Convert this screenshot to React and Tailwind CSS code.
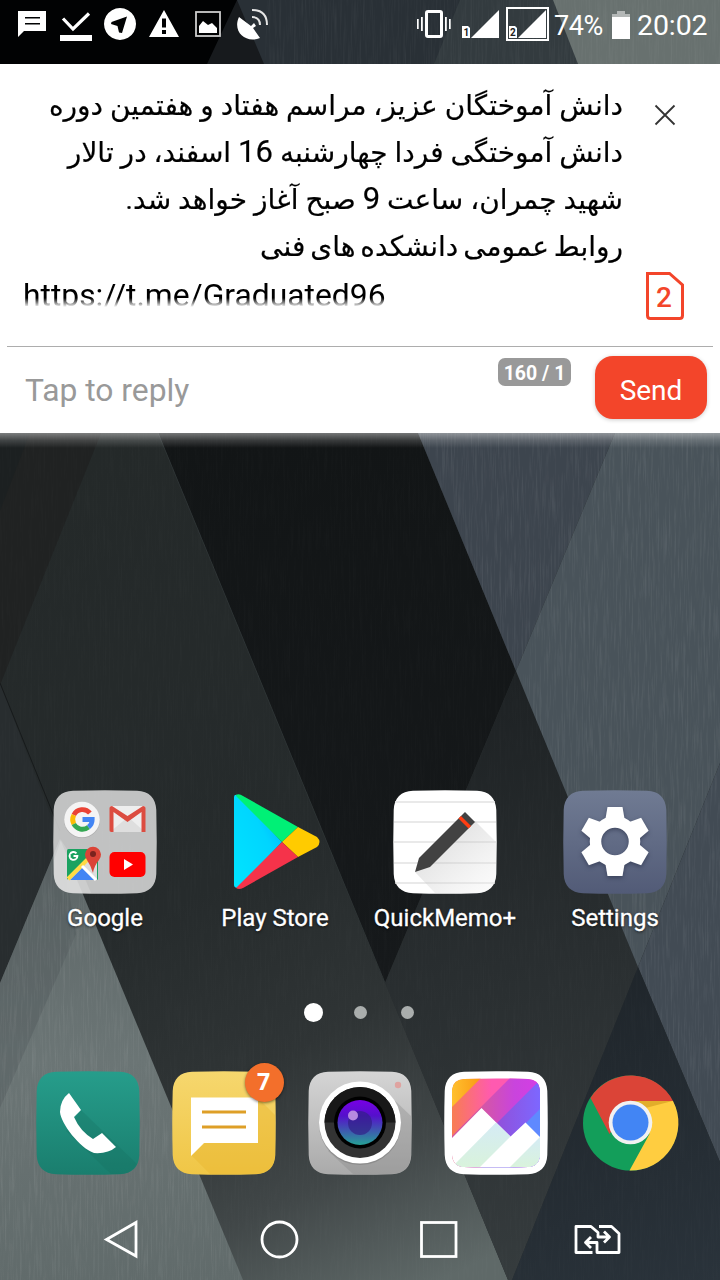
const Tile = ({ children, label }) => (
  <div className="flex w-[170px] flex-col items-center">
    <svg className="block h-[104px] w-[104px] overflow-visible" viewBox="0 0 104 104">{children}</svg>
    <span className="mt-[10px] font-['Roboto'] text-[24px] leading-[28px] whitespace-nowrap text-white [-webkit-text-stroke:0.3px_white] [text-shadow:0_1px_3px_rgba(0,0,0,.7)]">{label}</span>
  </div>
);

const SQ = "M20 0.800 Q52 -0.400 84 0.800 C96 1.200 102.800 8 103.300 20 Q104.200 52 103.300 84 C102.800 96 96 102.800 84 103.200 Q52 104.400 20 103.200 C8 102.800 1.200 96 0.700 84 Q-0.200 52 0.700 20 C1.200 8 8 1.200 20 0.800Z";

function Wallpaper() {
  return (
    <svg className="absolute inset-0 h-[1280px] w-[720px]" viewBox="0 0 720 1280" preserveAspectRatio="none">
      <defs>
        <linearGradient id="wMid" x1="60" y1="460" x2="440" y2="1280" gradientUnits="userSpaceOnUse">
          <stop offset="0" stopColor="#242929" /><stop offset=".5" stopColor="#262b2c" /><stop offset=".7" stopColor="#2f3435" /><stop offset=".85" stopColor="#414748" /><stop offset="1" stopColor="#5f6968" />
        </linearGradient>
        <linearGradient id="wBlack" x1="0" y1="433" x2="0" y2="983" gradientUnits="userSpaceOnUse">
          <stop offset="0" stopColor="#121516" /><stop offset="1" stopColor="#16191b" />
        </linearGradient>
        <linearGradient id="wLow" x1="450" y1="671" x2="580" y2="1280" gradientUnits="userSpaceOnUse">
          <stop offset="0" stopColor="#1d2123" /><stop offset="1" stopColor="#363c3e" />
        </linearGradient>
        <linearGradient id="wNavy" x1="560" y1="967" x2="720" y2="1280" gradientUnits="userSpaceOnUse">
          <stop offset="0" stopColor="#1e2429" /><stop offset="1" stopColor="#2a333b" />
        </linearGradient>
        <linearGradient id="wLight" x1="0" y1="839" x2="0" y2="1280" gradientUnits="userSpaceOnUse">
          <stop offset="0" stopColor="#5c6566" /><stop offset=".5" stopColor="#6b7575" /><stop offset="1" stopColor="#616b6b" />
        </linearGradient>
        <linearGradient id="shade" x1="0" y1="433" x2="0" y2="448" gradientUnits="userSpaceOnUse">
          <stop offset="0" stopColor="#fff" stopOpacity=".42" /><stop offset=".5" stopColor="#fff" stopOpacity=".16" /><stop offset="1" stopColor="#fff" stopOpacity="0" />
        </linearGradient>
        <filter id="brush" x="0" y="0" width="100%" height="100%">
          <feTurbulence type="fractalNoise" baseFrequency="0.55 0.025" numOctaves="3" seed="4" />
          <feColorMatrix values="0 0 0 0 1  0 0 0 0 1  0 0 0 0 1  1.6 0 0 0 -.68" />
        </filter>
        <clipPath id="cl"><path d="M60 839L243 1280H0V983ZM418 433H720V1162L638 967Z" /></clipPath>
      </defs>
      <rect width="720" height="1280" fill="#252a2b" />
      <path d="M0 433H158L508 1280H0Z" fill="url(#wMid)" />
      <path d="M0 433H101L0 685Z" fill="#202222" />
      <path d="M0 433H30L0 511Z" fill="#1c2021" />
      <path d="M158 433H418L516 671L385 983Z" fill="url(#wBlack)" />
      <path d="M516 671L385 983L508 1280H512L638 967Z" fill="url(#wLow)" />
      <path d="M418 433H615L516 671Z" fill="#3d454e" />
      <path d="M615 433H720V763L638 967L516 671Z" fill="#49535a" />
      <path d="M720 763V1162L638 967Z" fill="#424b54" />
      <path d="M638 967L720 1162V1280H512Z" fill="url(#wNavy)" />
      <path d="M0 683L60 839L0 983Z" fill="#282d2f" />
      <path d="M0 683L60 831" stroke="#171a1b" strokeWidth="1" />
      <path d="M60 839L243 1280H0V983Z" fill="url(#wLight)" />
      <path d="M76 934L60 839L0 983V1108Z" fill="#4f5859" opacity=".38" />
      <path d="M158 433L385 983" stroke="#2d3334" strokeWidth="1" />
      <g clipPath="url(#cl)"><rect width="720" height="1280" filter="url(#brush)" opacity=".08" /></g>
      <rect width="720" height="1280" filter="url(#brush)" opacity=".02" />
      <rect y="433" width="720" height="15" fill="url(#shade)" />
      <rect width="720" height="64" fill="#010203" />
      <path d="M237 0H720V64H207Z" fill="#171a1d" />
      <path d="M237 0H720V64H264Z" fill="#293036" />
      <path d="M460 0H720V64H434Z" fill="#333b3f" />
      <path d="M553 0H720V64H578Z" fill="#68716f" />
      <rect x="265" width="455" height="64" filter="url(#brush)" opacity=".06" />
    </svg>
  );
}

function StatusBar() {
  return (
    <header className="flex h-16 w-full">
      <svg className="block h-16 w-[553px]" viewBox="0 0 553 64" fill="#fff">
        <path d="M18 11H46V31H24L18 37ZM25 17V18.500H40V17ZM25 23V24.500H40V23Z" fillRule="evenodd" />
        <path d="M63 18.500L73 29L89 13.500" fill="none" stroke="#fff" strokeWidth="3.200" /><rect x="60" y="35" width="32" height="6" />
        <path fillRule="evenodd" d="M120 8a16 16 0 1 0 .01 0ZM127 16.500L122 33L119 32.500L117.500 26L111 24L111.500 22Z" />
        <path fillRule="evenodd" d="M164 10L179 37H149ZM162 18.500V27.500H166V18.500ZM162 30V34H166V30Z" />
        <rect x="196" y="12" width="24" height="24" fill="none" stroke="#ccc" strokeWidth="1.800" />
        <path d="M199 33V26L203 21L208 25L212 23L217 28V33Z" />
        <path d="M239 17L251 26L254 23L256 26L253 28L260 38C246 44 232 32 239 17Z" />
        <path d="M252 17Q260 17 260 25M252 10Q267 10 267 25" fill="none" stroke="#e5e5e5" strokeWidth="2" />
        <rect x="426.500" y="11.500" width="15" height="25" rx="1.500" fill="none" stroke="#fff" strokeWidth="3" />
        <path d="M417 19h1.700v10h-1.700zM421 17h1.800v14h-1.800zM445 17h1.800v14h-1.800zM449 19h1.700v10h-1.700z" />
        <path d="M471 38L499 10V38Z" /><path d="M462 26H468L470 28V38H462Z" />
        <rect x="507" y="8" width="41" height="32" fill="none" stroke="#fff" strokeWidth="2" />
        <path d="M518 38L546 10V38Z" /><path d="M509 26H515L517 28V38H509Z" />
        <text x="463.500" y="36" fontSize="10" fontWeight="700" fill="#222" fontFamily="Roboto">1</text>
        <text x="510" y="36" fontSize="10" fontWeight="700" fill="#222" fontFamily="Roboto">2</text>
      </svg>
      <div className="flex h-[52px] items-center font-['Roboto'] text-white">
        <span className="w-[59px] pl-px text-[27px] leading-none tracking-[-0.4px]">74%</span>
        <svg className="relative -top-px h-7 w-[18px]" viewBox="0 0 18 28"><path d="M5 0H13V3H18V28H0V3H5Z" fill="#fff" /><path d="M5 0H13V3H18V6H0V3H5Z" fill="#b4b8b7" /></svg>
        <span className="pl-[7px] text-[28.500px] leading-none tracking-[-0.1px]">20:02</span>
      </div>
    </header>
  );
}

function MessageCard() {
  const line = "block w-fit whitespace-nowrap [-webkit-text-stroke:0.2px_black]";
  return (
    <section className="flex h-[369px] flex-col bg-white px-[7px]">
      <div className="flex h-[282px] justify-between">
        <div className="ml-4 h-[243px] w-[600px] overflow-hidden pt-[18px] font-['Roboto','DejaVu_Sans',sans-serif] text-[28px] leading-[47px] text-black [mask-image:linear-gradient(#000_0,#000_234px,transparent_243px)]" dir="rtl">
          <span className={line}>دانش آموختگان عزیز، مراسم هفتاد و هفتمین دوره</span>
          <span className={line}>دانش آموختگی فردا چهارشنبه <b className="text-[31px] leading-none font-normal">16</b> اسفند، در تالار</span>
          <span className={line}>شهید چمران، ساعت <b className="text-[31px] leading-none font-normal">9</b> صبح آغاز خواهد شد.</span>
          <span className="block w-fit whitespace-nowrap [-webkit-text-stroke:0.2px_black] [word-spacing:-2px]">روابط عمومی دانشکده های فنی</span>
          <span className="block pt-[2px] text-left text-[31.800px]" dir="ltr">https://t.me/Graduated96</span>
        </div>
        <svg className="block h-[282px] w-[75px]" viewBox="638 64 75 282">
          <path d="M655.500 105.500L674.500 124.500M674.500 105.500L655.500 124.500" stroke="#333" strokeWidth="1.800" />
          <path d="M647.500 273.500H669.500L682.500 285V315.500Q682.500 318.500 679.500 318.500H650.500Q647.500 318.500 647.500 315.500Z" fill="none" stroke="#f3452a" strokeWidth="3" />
          <text x="664" y="307" textAnchor="middle" fontSize="28" fontWeight="500" fill="#f3452a" fontFamily="Roboto">2</text>
        </svg>
      </div>
      <div className="flex h-[87px] justify-between border-t border-[#adadad] font-['Roboto']">
        <span className="pt-[20px] pl-[18px] text-[31.800px] leading-[46px] text-[#999]">Tap to reply</span>
        <div className="flex pr-[6px]">
          <span className="mt-[11px] mr-6 h-7 w-[73px] rounded-[7px] bg-[#999] text-center text-[19.500px] leading-[31px] font-bold text-white">160 / 1</span>
          <button className="mt-[9px] h-[63px] w-[112px] rounded-[18px] bg-[#f3452a] pt-[6px] text-[28px] text-white shadow-[0_1px_4px_rgba(0,0,0,.2)]">Send</button>
        </div>
      </div>
    </section>
  );
}

function GoogleG({ x, y, s, mono }) {
  const c = mono ? ["#fff", "#fff", "#fff", "#fff"] : ["#ea4335", "#fbbc05", "#34a853", "#4285f4"];
  return (
    <g transform={`translate(${x} ${y}) scale(${s})`} fill="none" strokeWidth="4.800">
      <path d="M7.400 -6.500A9.700 9.700 0 0 0 -8.700 -4.500" stroke={c[0]} /><path d="M-8.700 -4.500A9.700 9.700 0 0 0 -8.700 4.500" stroke={c[1]} />
      <path d="M-8.700 4.500A9.700 9.700 0 0 0 6 7.600" stroke={c[2]} /><path d="M0 0H9.700A9.700 9.700 0 0 1 6 7.600" stroke={c[3]} />
    </g>
  );
}

function Apps() {
  return (
    <main className="flex h-[145px] justify-center">
      <Tile label="Google">
        <path d={SQ} fill="#e8e8e8" fillOpacity=".8" />
        <path d="M8 50L1 70V84C1.500 96 8 102.500 20 103H38L30 84Z" fill="#fff" opacity=".18" />
        <circle cx="29" cy="30" r="18" fill="#999" opacity=".5" /><circle cx="29" cy="29.500" r="17.800" fill="#f4f4f4" />
        <GoogleG x={29.500} y={29.500} s={1} />
        <path d="M57 16H92V42H57Z" fill="#eee" /><path d="M57 42L75 27L92 42Z" fill="#dedede" />
        <path d="M56.500 18Q56.500 16 59 16L74.500 26L90 16Q92.500 16 92.500 18V42H88.500V22L74.500 32L60.500 22V42H58Q56.500 42 56.500 40Z" fill="#dc4c40" />
        <rect x="14" y="59" width="31" height="31" rx="1.500" fill="#1aa260" /><path d="M14 90L44 60V90Z" fill="#ddd" /><path d="M17 90L30 77L43 90Z" fill="#4285f4" /><path d="M15 89L37 67" stroke="#ffdb46" strokeWidth="4" /><path d="M29 76L43 90" stroke="#fff" strokeWidth="3" />
        <GoogleG x={20.500} y={66} s={0.4} mono />
        <path d="M40 83Q38 76 34 70A8 8 0 1 1 46 70Q41 76 40 83Z" fill="#db4437" /><circle cx="40" cy="64" r="3" fill="#7b231e" />
        <rect x="56.500" y="62" width="36" height="25" rx="5" fill="#f00" /><path d="M71 69V80L80 74.500Z" fill="#fff" />
      </Tile>
      <Tile label="Play Store">
        <defs><linearGradient id="pb" x1="0" y1="1" x2="1" y2="0"><stop offset="0" stopColor="#00e5ff" /><stop offset=".6" stopColor="#00d5ff" /><stop offset="1" stopColor="#00a8ff" /></linearGradient></defs>
        <path d="M11 7Q11 4 15 5L59 52L15 98Q11 98 11 95Z" fill="url(#pb)" />
        <path d="M13 5Q16 3 20 6L75 37L59 52L13 6Z" fill="#00f076" />
        <path d="M75 37L94 47Q99 52 94 57L75 67L59 52Z" fill="#ffcb00" />
        <path d="M75 67L20 98Q16 100 13 98L59 52Z" fill="#f5334a" />
      </Tile>
      <Tile label="QuickMemo+">
        <path d={SQ} fill="#fff" /><path d="M2 12H102M1 32H103M1 52H103M1 73H103M2 93H102" stroke="#e2e2e2" strokeWidth="1.500" />
        <defs><linearGradient id="qs" x1="40" y1="40" x2="90" y2="100" gradientUnits="userSpaceOnUse"><stop stopColor="#aaa" stopOpacity=".4" /><stop offset="1" stopColor="#eee" stopOpacity=".3" /></linearGradient></defs>
        <path d="M22 82L82 31L103 52V84C102.500 96 96 102.500 84 103H42Z" fill="url(#qs)" />
        <path d="M22 82L26 68L72 22L82 32L37 77Z" fill="#424242" /><path d="M65.500 28.500L68 26L78 36L75.500 38.500Z" fill="#ff3d12" />
      </Tile>
      <Tile label="Settings">
        <defs><linearGradient id="sg" x2="0" y2="1"><stop stopColor="#707b93" /><stop offset="1" stopColor="#525b77" /></linearGradient></defs>
        <path d={SQ} fill="url(#sg)" />
        <g transform="translate(52 51.500)" fill="#fff" className="drop-shadow-[0_2px_2px_rgba(30,35,60,.5)]"><circle r="19.500" fill="none" stroke="#fff" strokeWidth="11.500" />
          {[0, 60, 120, 180, 240, 300].map((a) => <path key={a} transform={`rotate(${a})`} d="M-10 -20L-7.500 -34.500H7.500L10 -20L5 -15H-5Z" />)}
        </g>
      </Tile>
    </main>
  );
}

function Dock() {
  const c = "block h-[104px] w-[104px] overflow-visible";
  return (
    <div className="flex h-[104px] justify-between px-[36px]">
      <svg className={c} viewBox="0 0 104 104">
        <defs><linearGradient id="ph" x2="0" y2="1"><stop stopColor="#269d8b" /><stop offset="1" stopColor="#1a7e6e" /></linearGradient></defs>
        <path d={SQ} fill="url(#ph)" /><path d="M45 39L101 93Q96 103 82 103H75L30 60Z" fill="#126b5d" opacity=".25" />
        <path d="M33 22L45 39L38 46Q44 60 57 68L66 62L80 76Q72 83 58 82C44 77 25 53 24 41Q24 29 33 22Z" fill="#fff" />
      </svg>
      <div className="relative">
        <svg className={c} viewBox="0 0 104 104">
          <defs><linearGradient id="ms" x2="0" y2="1"><stop stopColor="#f6d76e" /><stop offset="1" stopColor="#f0c646" /></linearGradient></defs>
          <path d={SQ} fill="url(#ms)" /><path d="M86 27L103 44V84C102.500 96 96 102.500 84 103H38L19 84Z" fill="#e9b52d" opacity=".4" />
          <path d="M19 26.500H86V72H32L19 85Z" fill="#fff" /><path d="M30 41H74M30 56H74" stroke="#de9f27" strokeWidth="3.200" />
        </svg>
        <span className="absolute -top-[8px] -right-[8px] flex h-[39px] w-[39px] items-center justify-center rounded-full bg-[#f36f2b] pr-[2px] pb-[3px] font-['Open_Sans'] text-[23px] font-bold text-white shadow-[0_1px_3px_rgba(0,0,0,.5)]">7</span>
      </div>
      <svg className={c} viewBox="0 0 104 104">
        <defs><linearGradient id="ca" x2="0" y2="1"><stop stopColor="#d5d5d5" /><stop offset="1" stopColor="#aaa" /></linearGradient><linearGradient id="le" x2="0" y2="1"><stop stopColor="#7800e6" /><stop offset=".35" stopColor="#5510cb" /><stop offset="1" stopColor="#26a195" /></linearGradient></defs>
        <path d={SQ} fill="url(#ca)" /><path d="M80 23L103 45V84C102.500 96 96 102.500 84 103H45L20 80Z" fill="#888" opacity=".35" />
        <circle cx="52" cy="53" r="41" fill="#777" opacity=".5" /><circle cx="52" cy="51.500" r="41" fill="#fff" /><circle cx="52" cy="51.500" r="35.500" fill="#333" /><path d="M16.500 51.500A35.500 35.500 0 0 1 87.500 51.500Z" fill="#181818" />
        <circle cx="52" cy="51.500" r="26" fill="#000" /><circle cx="52" cy="51.500" r="22.500" fill="url(#le)" /><circle cx="52" cy="52" r="12" fill="#322087" opacity=".7" /><circle cx="45" cy="44.500" r="5" fill="#b68ae0" /><circle cx="90" cy="14" r="3.200" fill="#dfa3a0" />
      </svg>
      <svg className={c} viewBox="0 0 104 104">
        <defs>
          <clipPath id="gc"><path d="M20 8Q52 7 84 8Q95 8.500 96 19V84Q95 95.500 84 96Q52 97 20 96Q9 95.500 8 84V19Q9 8.500 20 8Z" /></clipPath>
          <linearGradient id="g0" x1="8" x2="36" y1="0" y2="0" gradientUnits="userSpaceOnUse"><stop stopColor="#ffc02e" /><stop offset="1" stopColor="#fa9a14" /></linearGradient>
          <linearGradient id="g1" x1="8" x2="96" y1="0" y2="0" gradientUnits="userSpaceOnUse"><stop stopColor="#f87d52" /><stop offset=".45" stopColor="#ff5ab0" /><stop offset="1" stopColor="#ff5ab0" /></linearGradient>
          <linearGradient id="g2" x1="38" x2="92" y1="0" y2="0" gradientUnits="userSpaceOnUse"><stop stopColor="#d457a4" /><stop offset=".6" stopColor="#c944dd" /><stop offset="1" stopColor="#d33ee4" /></linearGradient>
          <linearGradient id="g3" x1="50" x2="96" y1="0" y2="0" gradientUnits="userSpaceOnUse"><stop stopColor="#924fd8" /><stop offset="1" stopColor="#7d67ff" /></linearGradient>
          <linearGradient id="g4" x2="0" y2="1"><stop stopColor="#d5ebf5" /><stop offset="1" stopColor="#d9f3dc" /></linearGradient>
        </defs>
        <path d={SQ} fill="#fff" />
        <g clipPath="url(#gc)">
          <path d="M0 0H104V104H0Z" fill="url(#g1)" /><path d="M0 44V0H44Z" fill="url(#g0)" /><path d="M73 0H104V104H0V73Z" fill="url(#g2)" /><path d="M104 1V104H1Z" fill="url(#g3)" /><path d="M104 30V104H30Z" fill="#5f89ff" />
          <path d="M0 75L37.500 37L66.500 65.500L81.500 51.500L104 74V104H0Z" fill="#fff" /><path d="M52 51.500L66.500 65.500L36 96H8Z" fill="url(#g4)" /><path d="M96 66V96H66Z" fill="url(#g4)" />
        </g>
      </svg>
      <svg className={c} viewBox="1.500 0 104 104">
        <circle cx="52" cy="52" r="47.500" fill="#139e5a" /><path d="M12 27A47.500 47.500 0 0 1 94.500 30H52L31 63Z" fill="#db4437" />
        <path d="M52 30H94.500A47.500 47.500 0 0 1 51 99.500L71 63Z" fill="#ffcd40" /><path d="M52 30H94L67 37Z" fill="#e2ad2a" /><circle cx="52" cy="51.500" r="21.800" fill="#f1f1f1" /><circle cx="52" cy="51.500" r="18" fill="#4285f4" />
      </svg>
    </div>
  );
}

export default function App() {
  return (
    <div className="relative h-[1280px] w-[720px] overflow-hidden">
      <Wallpaper />
      <div className="relative flex h-[1280px] flex-col">
        <StatusBar />
        <MessageCard />
        <div className="h-[357px]" />
        <div className="px-5"><Apps /></div>
        <div className="mt-[67px] flex h-5 items-center justify-center gap-[34px]">
          <i className="-mr-[3px] h-[19px] w-[19px] rounded-full bg-white" /><i className="h-[13px] w-[13px] rounded-full bg-[#aaaead]" /><i className="mr-[3px] h-[13px] w-[13px] rounded-full bg-[#aaaead]" />
        </div>
        <div className="mt-[49px]"><Dock /></div>
        <svg className="mt-[15px] block h-[90px] w-[720px]" viewBox="0 1190 720 90" fill="none" stroke="#fff" strokeWidth="2.800">
          <path d="M136 1222.500V1256L106.500 1239.500Z" /><circle cx="279.500" cy="1239.500" r="17.500" /><rect x="421.500" y="1222.500" width="34.500" height="34" />
          <path d="M592.500 1252.500H576V1226.500H591L598 1232.500V1237H608M604 1231.500L609.500 1237L604 1242.500M599 1226.500H611.500L619 1233.500V1252.500H597V1242.500H586M591 1237L585.500 1242.500L591 1248" strokeWidth="2.800" strokeLinejoin="round" />
        </svg>
      </div>
    </div>
  );
}
